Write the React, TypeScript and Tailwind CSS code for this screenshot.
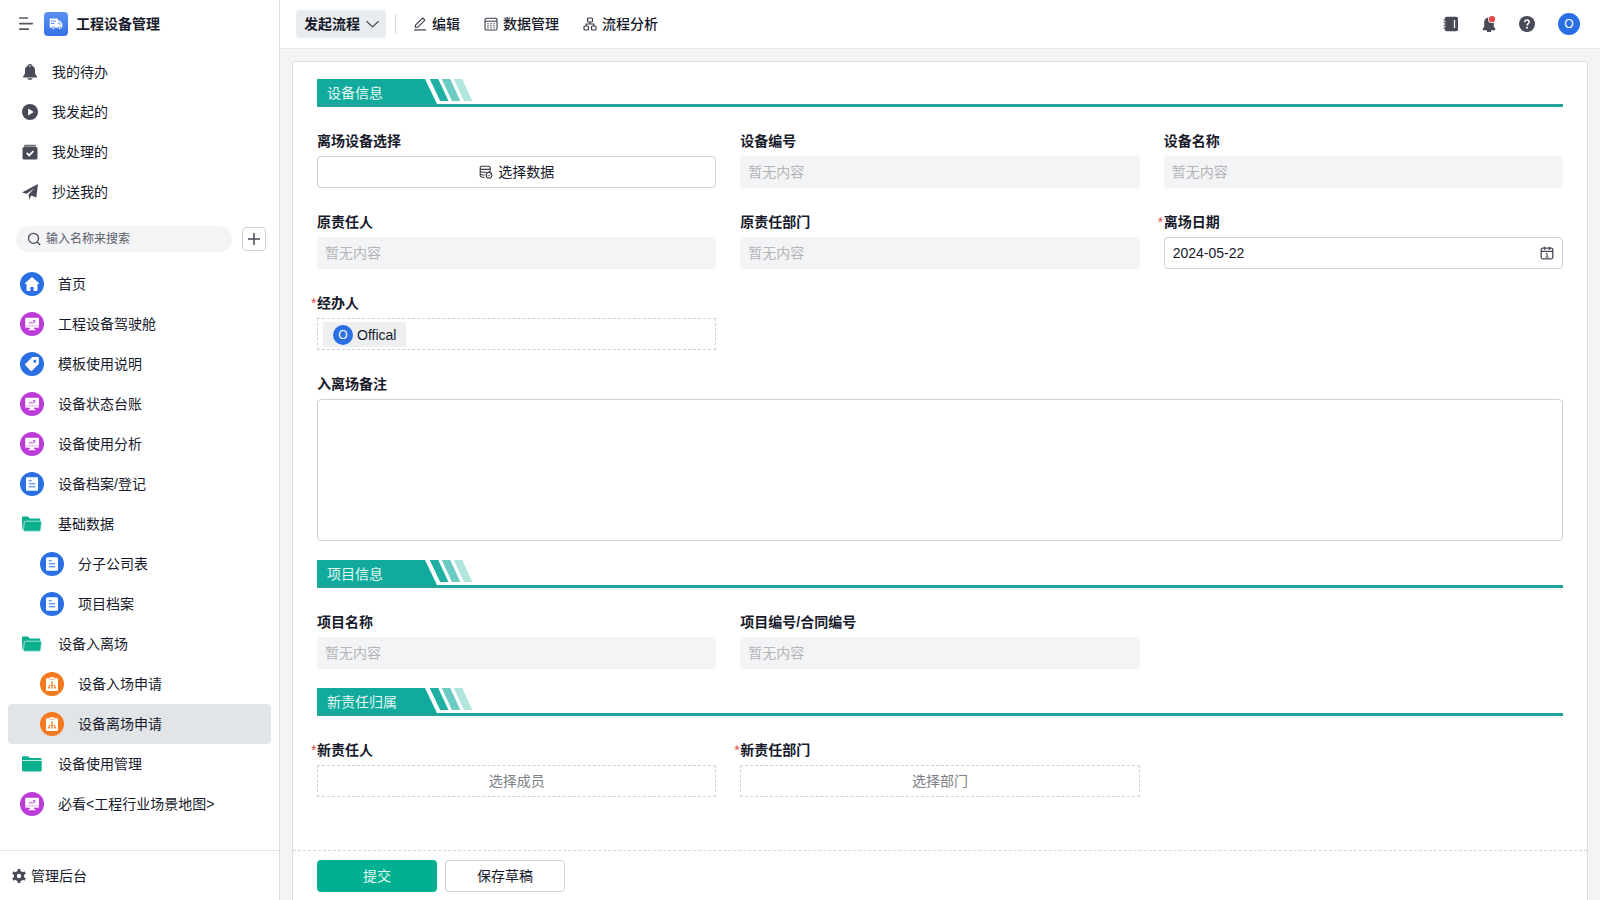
import type { ReactNode } from "react";

const Svg = ({ size = 16, children }: { size?: number; children: ReactNode }) => (
    <svg
        className="shrink-0"
        width={size}
        height={size}
        viewBox={`0 0 ${size} ${size}`}
        fill="none"
        stroke="none"
        aria-hidden="true">
        {children}
    </svg>
);

const MenuIcon = () => (
    <Svg>
        <path d="M1.800 2h7.600M1.800 7.600h12.400M1.800 13.200h8.400" stroke="#555761" strokeWidth="1.700" strokeLinecap="round" />
    </Svg>
);

const TruckIcon = () => (
    <Svg size={14}>
        <path
            fill="#fff"
            d="M1.500 1.500h6.700c.5 0 .8.300.8.800V3.600h1.800l2.500 2.800v3.600c0 .5-.3.800-.8.800h-.3a1.700 1.700 0 0 0-3.300 0H6a1.700 1.700 0 0 0-3.300 0H1.500c-.5 0-.8-.3-.8-.8V2.300c0-.5.300-.8.800-.8z"
        />
        <path d="M2 4.200h5M2 6.500h3.500M9.900 5v2h2" stroke="#4b82ee" strokeWidth=".9" />
        <circle cx="4.300" cy="11.300" r="1" fill="#fff" />
        <circle cx="10.600" cy="11.300" r="1" fill="#fff" />
    </Svg>
);

const BellIcon = () => (
    <Svg>
        <path
            fill="#484a58"
            d="M8 0c1.200 0 2 .8 2.200 1.700C12 2.500 13 4.200 13 6.300v3.200l2 3.200c.2.400 0 .8-.5.8h-13c-.5 0-.7-.4-.5-.8l2-3.200V6.300c0-2.100 1-3.800 2.800-4.600C6 .8 6.800 0 8 0zM5.400 14.300h5.200C10.200 15.500 9.200 16 8 16s-2.200-.5-2.600-1.700z"
        />
        <circle cx="8" cy="2.200" r=".9" fill="#c9cad0" />
    </Svg>
);

const PlayIcon = () => (
    <Svg>
        <circle cx="8" cy="8" r="8" fill="#484a58" />
        <path d="M6.200 4.400v7.200L11.800 8z" fill="#fff" />
    </Svg>
);

const DoneIcon = () => (
    <Svg>
        <path d="M3 .8h10c.7 0 1 .5 1 1v.9H2v-.9c0-.5.300-1 1-1z" fill="#6f717c" />
        <rect x=".500" y="3" width="15" height="12.500" rx="1.500" fill="#484a58" />
        <path d="M4.800 9l2.400 2.400 4.200-4.300" stroke="#fff" strokeWidth="1.800" />
    </Svg>
);

const SendIcon = () => (
    <Svg>
        <path fill="#484a58" d="M16 0 14.300 13.600 9.200 11.600 7.200 15.600 6.600 10.600 12.400 4.200 4.800 9.700 0 8.400z" />
    </Svg>
);

const SearchIcon = () => (
    <Svg size={14}>
        <circle cx="6.500" cy="6.300" r="5" stroke="#484a58" strokeWidth="1.300" />
        <path d="M10.200 10 13.200 13" stroke="#484a58" strokeWidth="1.300" />
    </Svg>
);

const PlusIcon = () => (
    <Svg size={14}>
        <path d="M7 1v12M1 7h12" stroke="#484a58" strokeWidth="1.500" />
    </Svg>
);

const HomeGlyph = () => (
    <Svg size={24}>
        <path
            fill="#fff"
            d="M12 5 19 11.300c.3.300.1.800-.3.800H17.500v6c0 .5-.3.900-.9.900h-3v-4h-3.200v4h-3c-.6 0-.9-.4-.9-.9v-6H5.300c-.4 0-.6-.5-.3-.8z"
        />
    </Svg>
);

const ScreenGlyph = () => (
    <Svg size={24}>
        <path
            fill="#fff"
            d="M6 5.800h12.200c.5 0 .8.300.8.800v8.400c0 .5-.3.800-.8.800h-4.200v1.300h1.300v1.200H8.700v-1.200H10v-1.300H6c-.5 0-.8-.3-.8-.8V6.600c0-.5.300-.8.800-.8z"
        />
        <path d="M5.200 13.900h13.800" stroke="#d98ae8" strokeWidth=".7" />
        <path d="M8.800 12 10.600 9.900 12.400 11.500 14.700 8.800M12.900 8.600h2v2" stroke="#bb3bd8" strokeWidth=".9" />
    </Svg>
);

const TagGlyph = () => (
    <Svg size={24}>
        <path
            fill="#fff"
            fillRule="evenodd"
            d="M12.600 5.100 18 5c.500 0 .9.400.9.900L18.800 11.400c0 .3-.1.600-.3.800L12 18.700c-.4.400-.9.400-1.300 0L5.300 13.300c-.4-.4-.4-.9 0-1.300l6.500-6.600c.2-.2.500-.3.800-.3zM14.800 7.800a1.500 1.500 0 1 0 0 3 1.500 1.500 0 0 0 0-3z"
        />
    </Svg>
);

const DocGlyph = () => (
    <Svg size={24}>
        <rect x="6" y="5.300" width="12" height="13.400" rx="1" fill="#fff" />
        <path d="M8.700 8.800h3M8.700 11.800h6.600M8.700 14.800h6.600" stroke="#2a70e4" strokeWidth="1" />
    </Svg>
);

const FlowGlyph = () => (
    <Svg size={24}>
        <path fill="#fff" d="M7 6.200h2.600V5.200h4.800v1H17c.6 0 1 .4 1 1v10.800c0 .6-.4 1-1 1H7c-.6 0-1-.4-1-1V7.200c0-.6.400-1 1-1z" />
        <path d="M9.500 7.500h5" stroke="#f5a56b" strokeWidth=".7" />
        <path d="M12 10.500v4.500M9 15.200v-1.800h6v1.800" stroke="#f5791f" strokeWidth=".8" />
        <path d="M11.100 9.700h1.800v1.800h-1.800zM8.200 14.800h1.700v1.600H8.200zM11.200 14.800h1.600v1.600h-1.600zM14.100 14.800h1.700v1.600h-1.700z" fill="#f5791f" />
    </Svg>
);

const FolderOpenGlyph = () => (
    <Svg size={24}>
        <path fill="#0bb08e" d="M3.200 4.600h4.900l1.700 1.800H19c.8 0 1.300.5 1.300 1.300V12H4v6.500c-1-.2-1.600-.8-1.700-1.700L2 5.800c0-.7.500-1.200 1.200-1.200z" />
        <path
            fill="#0bb08e"
            stroke="#c5eee4"
            strokeWidth=".8"
            d="M5.300 9.200h15.500c.5 0 .8.300.7.800l-.8 8.200c-.1.600-.5 1-1.100 1H3.400l.9-9.200c0-.5.500-.8 1-.8z"
        />
    </Svg>
);

const FolderGlyph = () => (
    <Svg size={24}>
        <path fill="#0bb08e" d="M3.300 4.300h4.900l1.800 1.800h9.800c1 0 1.700.6 1.700 1.400v.6H2V5.600c0-.8.500-1.300 1.300-1.300z" />
        <path fill="#0bb08e" d="M2 8.800h19.700v9.300c0 .8-.6 1.400-1.300 1.400H3.300C2.600 19.500 2 18.900 2 18.100z" />
    </Svg>
);

const GearIcon = () => (
    <Svg size={14}>
        <path d="M7 0v14M.9 3.500l12.200 7M13.100 3.500.9 10.500" stroke="#484a58" strokeWidth="2.800" />
        <circle cx="7" cy="7" r="5.200" fill="#484a58" />
        <circle cx="7" cy="7" r="2.200" fill="#fff" />
    </Svg>
);

const ChevronIcon = () => (
    <Svg size={14}>
        <path d="M1.500 4.200 7.500 10 13.500 4.200" stroke="#484a58" strokeWidth="1.200" />
    </Svg>
);

const PenIcon = () => (
    <Svg size={14}>
        <path d="M1 12.900h12" stroke="#3a3c49" strokeWidth="1.200" />
        <path d="M2.200 10.300 2.700 7.900 9.700 1 11.900 3.200 4.900 10.100z" stroke="#3a3c49" strokeWidth="1.100" strokeLinejoin="round" />
    </Svg>
);

const TableIcon = () => (
    <Svg size={14}>
        <rect x="1" y="1.200" width="12" height="11.800" rx="1.500" stroke="#3a3c49" strokeWidth="1.100" />
        <path d="M1 4.200h12" stroke="#3a3c49" strokeWidth="1" />
        <path
            d="M3.300 6.200h1.400v1.100H3.300zM6.300 6.200h1.400v1.100H6.300zM9.300 6.200h1.400v1.100H9.300zM3.300 8.200h1.400v1.100H3.300zM6.300 8.200h1.400v1.100H6.300zM9.300 8.200h1.400v1.100H9.300zM3.300 10.200h1.400v1.100H3.300zM6.300 10.200h1.400v1.100H6.300zM9.300 10.200h1.400v1.100H9.300z"
            fill="#3a3c49"
        />
    </Svg>
);

const OrgIcon = () => (
    <Svg size={14}>
        <rect x="4.500" y="1" width="5" height="4" rx="1" stroke="#3a3c49" strokeWidth="1.200" />
        <rect x="1" y="9" width="4.500" height="4" rx="1" stroke="#3a3c49" strokeWidth="1.200" />
        <rect x="8.500" y="9" width="4.500" height="4" rx="1" stroke="#3a3c49" strokeWidth="1.200" />
        <path d="M7 5v2M3.200 9V7h7.600v2" stroke="#3a3c49" strokeWidth="1.200" />
    </Svg>
);

const DatabaseIcon = () => (
    <Svg size={14}>
        <rect x="1.200" y="1.200" width="10" height="3.200" rx="1.500" stroke="#3a3c49" strokeWidth="1.100" />
        <path
            d="M1.200 3v7.800c0 .9 1.600 1.600 4.300 1.700M11.200 3v3.500M1.200 5.800c0 .9 2 1.500 5 1.500h1.500M1.200 8.400c0 .9 1.700 1.500 4.500 1.600M11.200 5.800c0 .5-.6.900-1.500 1.200"
            stroke="#3a3c49"
            strokeWidth="1.100"
        />
        <circle cx="10" cy="10.200" r="2.800" stroke="#3a3c49" strokeWidth="1.100" />
        <path d="M8.800 10.200l.9.900 1.600-1.700" stroke="#3a3c49" strokeWidth=".9" />
    </Svg>
);

const CalendarIcon = () => (
    <Svg size={14}>
        <rect x="1.200" y="2.200" width="11.600" height="10.600" rx="1.500" stroke="#484a58" strokeWidth="1.300" />
        <path d="M1.200 5.400h11.600M4.500 .700v3.200M9.500 .700v3.200" stroke="#484a58" strokeWidth="1.300" />
        <path d="M5.700 7.600H7.100v3.500M5.600 11.100h3" stroke="#484a58" strokeWidth="1" />
    </Svg>
);

const NotebookIcon = () => (
    <Svg>
        <rect x="1.800" y=".800" width="13.200" height="14.400" rx="1.800" fill="#484a58" />
        <path d="M.5 4h3M.5 6.700h3M.5 9.300h3M.5 12h3" stroke="#484a58" strokeWidth="1" />
        <path d="M1.800 5.300h1.200M1.800 8h1.200M1.800 10.700h1.200" stroke="#fff" strokeWidth=".6" />
        <path d="M11.500 4v8" stroke="#fff" strokeWidth="1.300" />
    </Svg>
);

const NoticeIcon = () => (
    <Svg>
        <path fill="#484a58" d="M8 1.500c3 0 4.800 2.200 4.800 5v4.200l1.400 1.800v1.700H10a2 2 0 0 1-4 1L5.600 14.200H1.800v-1.700l1.400-1.800V6.500c0-2.800 1.800-5 4.800-5z" />
        <circle cx="11" cy="3.200" r="3.900" fill="#fff" />
        <circle cx="11" cy="3.200" r="3.100" fill="#e5484d" />
    </Svg>
);

const HelpIcon = () => (
    <Svg>
        <circle cx="8" cy="8" r="8" fill="#484a58" />
        <path d="M5.800 6.200C5.800 4.800 6.800 4 8 4s2.200.800 2.200 2c0 1.600-2.200 1.700-2.200 3.600" stroke="#fff" strokeWidth="1.500" />
        <circle cx="8" cy="11.800" r="1" fill="#fff" />
    </Svg>
);

type Kind = "home" | "screen" | "tag" | "doc" | "flow" | "folder" | "folderOpen";

const glyphs: Record<Kind, { bg: string; glyph: ReactNode }> = {
    home: { bg: "bg-[#2a70e4]", glyph: <HomeGlyph /> },
    screen: { bg: "bg-[#bb3bd8]", glyph: <ScreenGlyph /> },
    tag: { bg: "bg-[#2a70e4]", glyph: <TagGlyph /> },
    doc: { bg: "bg-[#2a70e4]", glyph: <DocGlyph /> },
    flow: { bg: "bg-[#f5791f]", glyph: <FlowGlyph /> },
    folder: { bg: "", glyph: <FolderGlyph /> },
    folderOpen: { bg: "", glyph: <FolderOpenGlyph /> },
};

const todoLinks = [
    { label: "我的待办", icon: <BellIcon /> },
    { label: "我发起的", icon: <PlayIcon /> },
    { label: "我处理的", icon: <DoneIcon /> },
    { label: "抄送我的", icon: <SendIcon /> },
];

const navItems: { label: string; kind: Kind; child?: boolean; active?: boolean }[] = [
    { label: "首页", kind: "home" },
    { label: "工程设备驾驶舱", kind: "screen" },
    { label: "模板使用说明", kind: "tag" },
    { label: "设备状态台账", kind: "screen" },
    { label: "设备使用分析", kind: "screen" },
    { label: "设备档案/登记", kind: "doc" },
    { label: "基础数据", kind: "folderOpen" },
    { label: "分子公司表", kind: "doc", child: true },
    { label: "项目档案", kind: "doc", child: true },
    { label: "设备入离场", kind: "folderOpen" },
    { label: "设备入场申请", kind: "flow", child: true },
    { label: "设备离场申请", kind: "flow", child: true, active: true },
    { label: "设备使用管理", kind: "folder" },
    { label: "必看<工程行业场景地图>", kind: "screen" },
];

const Sidebar = () => (
    <aside className="flex w-[280px] shrink-0 flex-col border-r border-[#dcdee1] bg-white">
        <div className="flex h-12 items-center pl-[18px]">
            <button type="button" aria-label="菜单">
                <MenuIcon />
            </button>
            <span className="ml-2.5 flex size-6 items-center justify-center rounded bg-linear-to-b from-[#5b91f3] to-[#3672e8]">
                <TruckIcon />
            </span>
            <h1 className="ml-2 font-bold">工程设备管理</h1>
        </div>

        <nav className="mt-1 px-2">
            {todoLinks.map((link) => (
                <a key={link.label} href="#" className="flex h-10 items-center gap-3.5 pl-3.5">
                    {link.icon}
                    {link.label}
                </a>
            ))}
        </nav>

        <div className="mt-3.5 flex items-center gap-2.5 pr-[13px] pl-4">
            <label className="flex h-[26px] min-w-0 flex-1 items-center gap-[5px] rounded-full bg-[#f3f4f6] pl-[11px]">
                <SearchIcon />
                <input
                    className="min-w-0 flex-1 text-xs outline-none placeholder:text-[#5a5c68]"
                    placeholder="输入名称来搜索"
                />
            </label>
            <button
                type="button"
                aria-label="新建"
                className="flex size-6 items-center justify-center rounded border border-[#cfd1d5]">
                <PlusIcon />
            </button>
        </div>

        <nav className="mt-3 min-h-0 flex-1 overflow-hidden px-2">
            {navItems.map((item) => (
                <a
                    key={item.label}
                    href="#"
                    className={`flex h-10 items-center gap-3.5 rounded ${item.child ? "pl-8" : "pl-3"} ${
                        item.active ? "bg-[#e2e5e8]" : ""
                    }`}>
                    <span className={`size-6 rounded-full ${glyphs[item.kind].bg}`}>{glyphs[item.kind].glyph}</span>
                    {item.label}
                </a>
            ))}
        </nav>

        <a href="#" className="flex h-[50px] items-center gap-[5px] border-t border-[#e2e5e8] pl-3">
            <GearIcon />
            管理后台
        </a>
    </aside>
);

const tabs = [
    { label: "编辑", icon: <PenIcon /> },
    { label: "数据管理", icon: <TableIcon /> },
    { label: "流程分析", icon: <OrgIcon /> },
];

const TopBar = () => (
    <header className="flex h-[49px] items-center border-b border-[#e4e6e9] bg-white pr-5 pl-4">
        <button type="button" className="flex h-7 items-center gap-[5px] rounded bg-[#e9ecef] pr-[7px] pl-2 font-bold">
            发起流程
            <ChevronIcon />
        </button>
        <span className="ml-[9px] h-5 w-px bg-[#d5d7da]" />
        <div className="flex items-center gap-6 pl-[17px]">
            {tabs.map((tab) => (
                <button key={tab.label} type="button" className="flex items-center gap-[5px] font-medium">
                    {tab.icon}
                    {tab.label}
                </button>
            ))}
        </div>
        <div className="mr-[23px] ml-auto flex items-center gap-[22px]">
            <button type="button" aria-label="通讯录">
                <NotebookIcon />
            </button>
            <button type="button" aria-label="通知">
                <NoticeIcon />
            </button>
            <button type="button" aria-label="帮助">
                <HelpIcon />
            </button>
        </div>
        <span className="flex size-[22px] items-center justify-center rounded-full bg-[#2a70e4] text-xs text-white">O</span>
    </header>
);

const SectionTitle = ({ title }: { title: string }) => (
    <div className="flex h-7 border-b-3 border-[#20a699]">
        <h2 className="flex w-[120px] items-center bg-[#12aa9c] pt-[3px] pl-2.5 text-[#e4f8f5] [clip-path:polygon(0_0,108px_0,120px_100%,0_100%)]">
            {title}
        </h2>
        <svg className="-ml-2" width="44" height="22" viewBox="0 0 44 22" aria-hidden="true">
            <path d="M.700 0h8.500l10.300 22h-8.300z" fill="#20b0a3" />
            <path d="M12.700 0h8.600l10 22H23z" fill="#6ccbc2" />
            <path d="M24.700 0h8.600l10 22H35z" fill="#b1e6df" />
        </svg>
    </div>
);

interface FieldProps {
    id: string;
    label: string;
    required?: boolean;
    wide?: boolean;
    children?: ReactNode;
}

const Field = ({ id, label, required, wide, children }: FieldProps) => (
    <div className={wide ? "col-span-3" : ""}>
        <div className="relative h-[25px] leading-5">
            {required && <span className="absolute top-0 -left-1.5 text-[#e5484d]">*</span>}
            <label htmlFor={id} className="font-bold">
                {label}
            </label>
        </div>
        {children ?? (
            <input
                id={id}
                readOnly
                placeholder="暂无内容"
                className="block h-8 w-full rounded-xs bg-[#f3f4f6] px-2 outline-none placeholder:text-[#b3b5b9]"
            />
        )}
    </div>
);

const pickerClass =
    "flex h-8 w-full items-center justify-center border border-dashed border-[#cfd1d4] text-[#7d8087]";

const EntryForm = () => (
    <form className="flex min-h-0 flex-1 flex-col rounded-t border border-b-0 border-[#dcdee1] bg-white">
        <div className="min-h-0 flex-1 overflow-hidden px-6 pt-[17px]">
            <SectionTitle title="设备信息" />
            <div className="mt-6 grid grid-cols-3 gap-6">
                <Field id="pick" label="离场设备选择">
                    <button
                        id="pick"
                        type="button"
                        className="flex h-8 w-full items-center justify-center gap-[5px] rounded border border-[#cfd1d5]">
                        <DatabaseIcon />
                        选择数据
                    </button>
                </Field>
                <Field id="code" label="设备编号" />
                <Field id="name" label="设备名称" />
                <Field id="owner" label="原责任人" />
                <Field id="dept" label="原责任部门" />
                <Field id="date" label="离场日期" required>
                    <div className="flex h-8 items-center rounded border border-[#cfd1d5] px-2">
                        <input id="date" defaultValue="2024-05-22" className="min-w-0 flex-1 outline-none" />
                        <CalendarIcon />
                    </div>
                </Field>
                <Field id="handler" label="经办人" required>
                    <button
                        id="handler"
                        type="button"
                        className="flex h-8 w-full items-end border border-dashed border-[#cfd1d4] pb-0.5 pl-[5px]">
                        <span className="flex h-[25px] items-center gap-1 bg-[#eeeff1] px-2.5">
                            <span className="flex size-5 items-center justify-center rounded-full bg-[#2a70e4] text-xs text-white">
                                O
                            </span>
                            Offical
                        </span>
                    </button>
                </Field>
                <Field id="remark" label="入离场备注" wide>
                    <textarea
                        id="remark"
                        className="block h-[142px] w-full resize-none rounded border border-[#cfd1d5] p-2 outline-none"
                    />
                </Field>
            </div>

            <div className="mt-[19px]">
                <SectionTitle title="项目信息" />
            </div>
            <div className="mt-6 grid grid-cols-3 gap-6">
                <Field id="project" label="项目名称" />
                <Field id="contract" label="项目编号/合同编号" />
            </div>

            <div className="mt-[19px]">
                <SectionTitle title="新责任归属" />
            </div>
            <div className="mt-6 grid grid-cols-3 gap-6">
                <Field id="newOwner" label="新责任人" required>
                    <button id="newOwner" type="button" className={pickerClass}>
                        选择成员
                    </button>
                </Field>
                <Field id="newDept" label="新责任部门" required>
                    <button id="newDept" type="button" className={pickerClass}>
                        选择部门
                    </button>
                </Field>
            </div>
        </div>

        <div className="flex h-[50px] items-start gap-2 border-t border-dashed border-[#d5d7da] px-6 pt-[9px]">
            <button type="submit" className="h-8 w-[120px] rounded bg-[#00b091] text-[#e4f8f5]">
                提交
            </button>
            <button type="button" className="h-8 w-[120px] rounded border border-[#cfd1d5]">
                保存草稿
            </button>
        </div>
    </form>
);

const App = () => {
    return (
        <div className="flex h-screen bg-[#f2f4f5] font-['Liberation_Sans','Noto_Sans_CJK_SC',sans-serif] text-sm text-[#171a2b]">
            <Sidebar />
            <div className="flex min-w-0 flex-1 flex-col">
                <TopBar />
                <main className="flex min-h-0 flex-1 flex-col px-3 pt-3">
                    <EntryForm />
                </main>
            </div>
        </div>
    );
};

export default App;
